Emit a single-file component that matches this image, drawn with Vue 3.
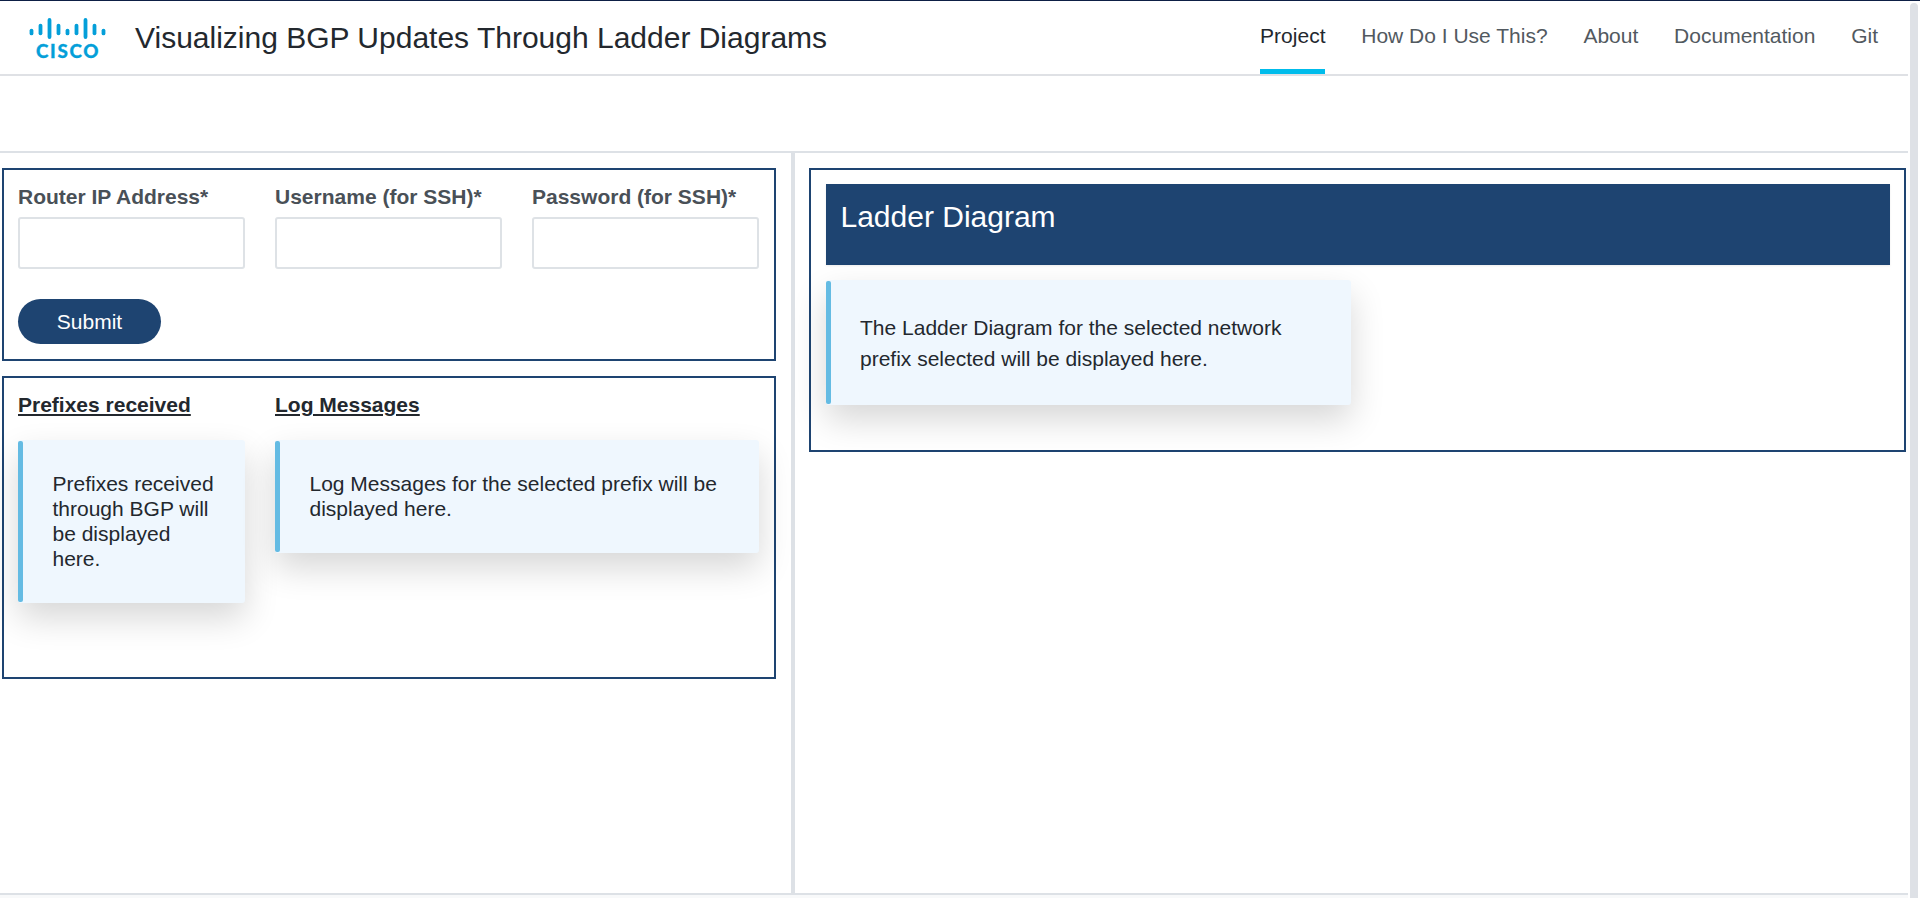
<script setup>
const links = ['Project', 'How Do I Use This?', 'About', 'Documentation', 'Git']
const fields = [
  { id: 'router', label: 'Router IP Address*', type: 'text' },
  { id: 'user', label: 'Username (for SSH)*', type: 'text' },
  { id: 'pass', label: 'Password (for SSH)*', type: 'password' }
]
const bars = [
  [31.5, 28.7, 35.3], [40.5, 23.8, 35.2], [49.5, 18, 39], [58.5, 23.8, 35.2], [67.5, 28.7, 35.3],
  [76.5, 23.8, 35.2], [85.5, 18, 39], [94.5, 23.8, 35.2], [103.5, 28.7, 35.3]
]
</script>

<template>
  <div class="page">
    <div class="view">
      <header class="header">
        <svg class="logo" width="80" height="54" viewBox="28 11 80 54" role="img" aria-label="Cisco">
          <rect v-for="b in bars" :key="b[0]" :x="b[0] - 1.9" :y="b[1]" width="3.8" :height="b[2] - b[1]" rx="1.9" />
          <text x="36" y="57.6" textLength="62.4" lengthAdjust="spacing">CISCO</text>
        </svg>
        <h1 class="title">Visualizing BGP Updates Through Ladder Diagrams</h1>
        <nav class="nav">
          <a v-for="(l, i) in links" :key="l" class="link" :class="{ active: i === 0 }">{{ l }}</a>
        </nav>
      </header>
      <div class="spacer"></div>
      <main class="main">
        <section class="left">
          <form class="box form" @submit.prevent>
            <div class="fields">
              <div v-for="f in fields" :key="f.id" class="field">
                <label :for="f.id">{{ f.label }}</label>
                <input :id="f.id" :type="f.type" />
              </div>
            </div>
            <button class="submit" type="submit">Submit</button>
          </form>
          <div class="box results">
            <div>
              <h2>Prefixes received</h2>
              <div class="note">Prefixes received through BGP will be displayed here.</div>
            </div>
            <div>
              <h2>Log Messages</h2>
              <div class="note">Log Messages for the selected prefix will be displayed here.</div>
            </div>
          </div>
        </section>
        <section class="right">
          <div class="box diagram">
            <div class="banner">Ladder Diagram</div>
            <div class="note wide">The Ladder Diagram for the selected network prefix selected will be displayed here.</div>
          </div>
        </section>
      </main>
      <footer class="footer"></footer>
    </div>
    <div class="scroll"></div>
  </div>
</template>

<style>
body { margin: 0; overflow: hidden; background: #fff; }
</style>

<style scoped>
* { box-sizing: border-box; }
.page {
  display: flex;
  height: 898px;
  border-top: 1px solid #0d1f45;
  font-family: "Liberation Sans", Arial, sans-serif;
  font-size: 21px;
  color: #23282e;
}
.view { width: 1908px; display: flex; flex-direction: column; }
.scroll { width: 8px; height: 910px; margin: 2px 0 0 2px; border-radius: 4px 4px 0 0; background: #dee1e6; }
.header { height: 75px; flex: none; display: flex; padding: 0 30px 0 28px; border-bottom: 2px solid #dfe1e5; }
.logo { margin-top: 10px; flex: none; fill: #049fd9; }
.logo text { font: 900 18.8px Lato, sans-serif; stroke: #049fd9; stroke-width: 0.3px; }
.title { margin: 0 0 0 27px; font-size: 30px; line-height: 73px; font-weight: 400; white-space: nowrap; }
.nav { margin-left: auto; display: flex; gap: 35.8px; }
.link { height: 73px; padding-top: 23px; line-height: 24px; color: #525960; white-space: nowrap; }
.active { color: #23282e; border-bottom: 5px solid #00bceb; }
.spacer { height: 77px; flex: none; border-bottom: 2px solid #dde1e6; }
.main { height: 740px; flex: none; display: flex; }
.left { width: 795px; padding: 15px 15px 0 2px; border-right: 4px solid #dde1e6; }
.right { flex: 1; padding: 15px 2px 0 14px; }
.box { border: 2px solid #1e4471; }
.form { height: 193px; padding: 14px; }
.fields { display: grid; grid-template-columns: repeat(3, 227px); gap: 30px; }
.field { display: flex; flex-direction: column; }
.field label { height: 33px; line-height: 26px; font-weight: 700; color: #495057; white-space: nowrap; }
.field input { width: 100%; height: 52px; padding: 0 12px; border: 2px solid #dee2e6; border-radius: 3px; background: #fff; outline: none; }
.submit {
  display: block; width: 143px; height: 45px; margin-top: 30px; padding: 0;
  border: 0; border-radius: 23px; background: #1e4471; color: #fff; font: inherit;
}
.results {
  height: 303px; margin-top: 15px; padding: 14px;
  display: grid; grid-template-columns: 227px 484px; gap: 30px; align-items: start;
}
h2 { margin: 0 0 22px; font-size: 21px; line-height: 26px; font-weight: 700; text-decoration: underline; text-decoration-thickness: 2px; text-underline-offset: 2px; }
.note {
  position: relative; padding: 31px 30px 32px 34.5px; border-radius: 3px;
  background: #eff7fe; line-height: 25px; box-shadow: 0 15px 34px rgba(0, 0, 0, 0.16);
}
.note::before {
  content: ""; position: absolute; left: 0; top: 1px; bottom: 1px; width: 5px;
  border-radius: 2px; background: #64bbe3;
}
.diagram { height: 284px; padding: 14px 14px 14px 15px; }
.banner {
  height: 81px; padding: 14px 14.5px; background: #1e4471; color: #fff;
  font-size: 30px; line-height: 37px; box-shadow: 0 1px 2px rgba(0, 0, 0, 0.08);
}
.wide { width: 525px; height: 125px; margin-top: 15px; padding-top: 32px; padding-left: 34px; line-height: 31px; }
.footer { height: 5px; border-top: 2px solid #dde1e6; background: #f8f9fa; }
</style>
